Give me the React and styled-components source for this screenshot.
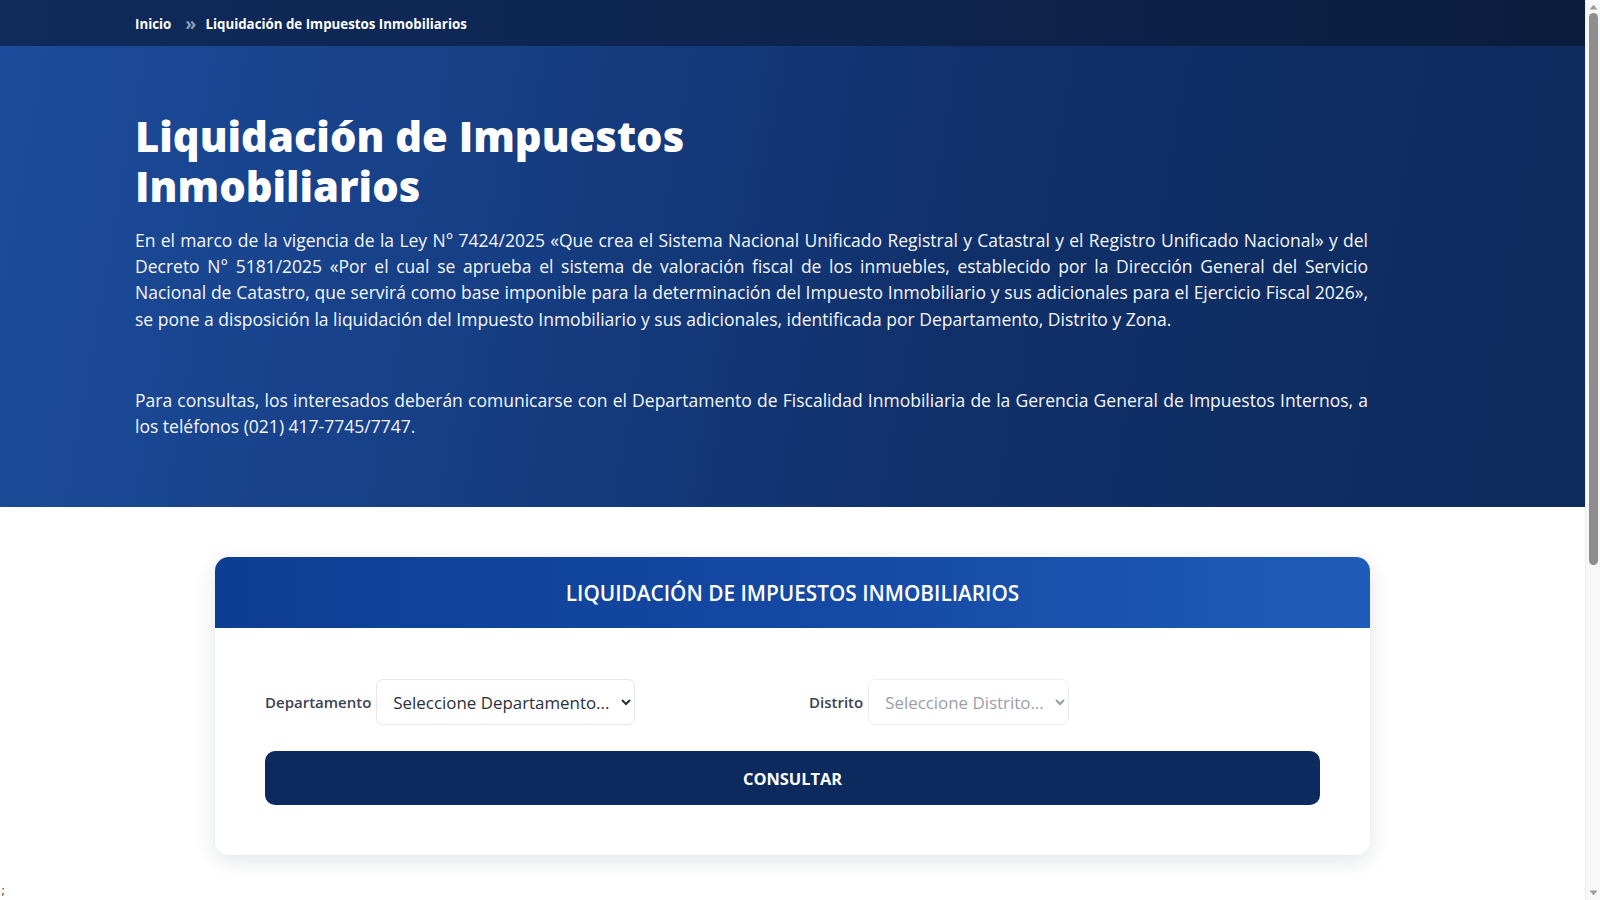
import React from "react";
import styled, { createGlobalStyle } from "styled-components";

const GlobalStyle = createGlobalStyle`
  html, body {
    margin: 0;
    padding: 0;
    background: #ffffff;
  }
  body {
    margin-right: 15px;
    font-family: "Open Sans", "Noto Sans", sans-serif;
    color: #212529;
  }
  * { box-sizing: border-box; }
`;

/* classic window scrollbar drawn along the right edge */
const ScrollTrack = styled.div`
  position: fixed;
  top: 0;
  right: 0;
  bottom: 0;
  width: 15px;
  background: #f8f8f8;
  border-left: 1px solid #ececec;
  z-index: 10;
`;

const ScrollThumb = styled.div`
  position: absolute;
  top: 13px;
  left: 3px;
  width: 9px;
  height: 552px;
  border-radius: 5px;
  background: #8e8e8e;
`;

const ScrollArrow = styled.svg`
  position: absolute;
  left: 3px;
  width: 9px;
  height: 6px;
  ${(p) => (p.$down ? "bottom: 4px;" : "top: 4px;")}
`;

const Breadcrumb = styled.nav`
  height: 46px;
  display: flex;
  align-items: center;
  padding: 2px 0 0 135px;
  background: linear-gradient(90deg, #0f2a5b 0%, #0d244d 55%, #0a1d3d 100%);
  font-size: 13.3px;
  font-weight: 700;
  color: #ffffff;
`;

const Crumb = styled.span`
  color: #ffffff;
`;

const CrumbSep = styled.span`
  color: #8f9cb6;
  padding: 0 9px 0 14px;
  font-size: 18px;
  line-height: 1;
  position: relative;
  top: -1px;
`;

const Hero = styled.header`
  background: linear-gradient(100deg, #1c4c9b 0%, #163f85 30%, #10306a 60%, #0e2b5c 100%);
  color: #ffffff;
  padding: 65px 217px 68px 135px;
`;

const HeroTitle = styled.h1`
  margin: 0 0 16px;
  max-width: 620px;
  font-size: 41.7px;
  line-height: 50px;
  font-weight: 800;
`;

const HeroText = styled.p`
  margin: 0 0 ${(p) => p.$after || 0}px;
  font-size: 17.5px;
  line-height: 26.2px;
  text-align: justify;
  color: #f4f6fa;
`;

const Section = styled.main`
  padding: 50px 0 0;
  display: flex;
  flex-direction: column;
  align-items: center;
`;

const Card = styled.section`
  width: 1155px;
  background: #ffffff;
  border-radius: 14px;
  box-shadow: 0 6px 22px rgba(20, 30, 50, 0.12);
  overflow: hidden;
`;

const CardHeader = styled.div`
  height: 71px;
  display: flex;
  align-items: center;
  justify-content: center;
  background: linear-gradient(90deg, #0d3e93 0%, #1448a3 50%, #1e5cb9 100%);
`;

const CardTitle = styled.h2`
  margin: 0;
  font-size: 20.8px;
  font-weight: 600;
  color: #ffffff;
`;

const CardBody = styled.div`
  padding: 51px 50px 50px;
  display: flex;
  flex-direction: column;
  gap: 26px;
`;

const FormRow = styled.div`
  display: grid;
  grid-template-columns: 1fr 1fr;
  column-gap: 33px;
`;

const Field = styled.div`
  display: flex;
  align-items: center;
  gap: 5px;
`;

const Label = styled.label`
  font-size: 15px;
  font-weight: 600;
  color: #3b4252;
`;

const Select = styled.select`
  height: 46px;
  padding: 0 8px 0 12px;
  font-family: "Open Sans", "Noto Sans", sans-serif;
  font-size: 16.9px;
  color: #2a2f36;
  background: #ffffff;
  border: 1px solid #e3e6ea;
  border-radius: 7px;
  outline: none;

  &:disabled {
    color: #6f7680;
    background: #ffffff;
    border-color: #e6e8eb;
  }
`;

const SubmitButton = styled.button`
  height: 54px;
  width: 100%;
  border: none;
  border-radius: 10px;
  background: #0c2a5e;
  color: #ffffff;
  font-family: "Open Sans", "Noto Sans", sans-serif;
  font-size: 16.4px;
  font-weight: 700;
  cursor: pointer;
`;

const Trailing = styled.div`
  align-self: flex-start;
  margin-top: 28px;
  height: 540px;
  font-family: "DejaVu Sans", sans-serif;
  font-size: 12px;
  color: #444;
  line-height: 16px;
  padding-left: 1px;
`;

export default function App() {
  return (
    <>
      <GlobalStyle />
      <ScrollTrack aria-hidden="true">
        <ScrollArrow viewBox="0 0 9 6">
          <path d="M0.5 5.5 L4.5 0.8 L8.5 5.5 Z" fill="#9a9a9a" />
        </ScrollArrow>
        <ScrollThumb />
        <ScrollArrow $down viewBox="0 0 9 6">
          <path d="M0.5 0.5 L4.5 5.2 L8.5 0.5 Z" fill="#9a9a9a" />
        </ScrollArrow>
      </ScrollTrack>

      <Breadcrumb>
        <Crumb>Inicio</Crumb>
        <CrumbSep>»</CrumbSep>
        <Crumb>Liquidación de Impuestos Inmobiliarios</Crumb>
      </Breadcrumb>

      <Hero>
        <HeroTitle>Liquidación de Impuestos Inmobiliarios</HeroTitle>
        <HeroText $after={55}>
          En el marco de la vigencia de la Ley N° 7424/2025 «Que crea el Sistema Nacional
          Unificado Registral y Catastral y el Registro Unificado Nacional» y del Decreto N°
          5181/2025 «Por el cual se aprueba el sistema de valoración fiscal de los inmuebles,
          establecido por la Dirección General del Servicio Nacional de Catastro, que servirá
          como base imponible para la determinación del Impuesto Inmobiliario y sus adicionales
          para el Ejercicio Fiscal 2026», se pone a disposición la liquidación del Impuesto
          Inmobiliario y sus adicionales, identificada por Departamento, Distrito y Zona.
        </HeroText>
        <HeroText>
          Para consultas, los interesados deberán comunicarse con el Departamento de Fiscalidad
          Inmobiliaria de la Gerencia General de Impuestos Internos, a los teléfonos (021)
          417-7745/7747.
        </HeroText>
      </Hero>

      <Section>
        <Card>
          <CardHeader>
            <CardTitle>LIQUIDACIÓN DE IMPUESTOS INMOBILIARIOS</CardTitle>
          </CardHeader>
          <CardBody>
            <FormRow>
              <Field>
                <Label htmlFor="departamento">Departamento</Label>
                <Select id="departamento" defaultValue="">
                  <option value="">Seleccione Departamento...</option>
                </Select>
              </Field>
              <Field>
                <Label htmlFor="distrito">Distrito</Label>
                <Select id="distrito" defaultValue="" disabled>
                  <option value="">Seleccione Distrito...</option>
                </Select>
              </Field>
            </FormRow>
            <SubmitButton type="button">CONSULTAR</SubmitButton>
          </CardBody>
        </Card>
        <Trailing>;</Trailing>
      </Section>
    </>
  );
}
